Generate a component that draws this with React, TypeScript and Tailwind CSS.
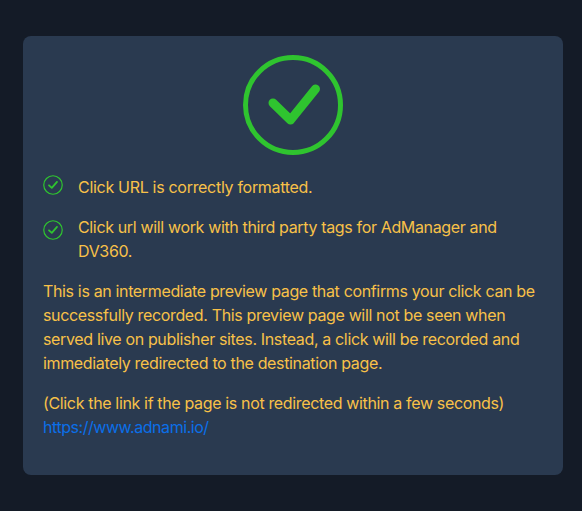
import React from 'react';

const SmallCheck = ({ className }: { className?: string }) => (
  <svg viewBox="0 0 20 20" fill="none" className={`w-5 h-5 shrink-0 ${className ?? ''}`}>
    <circle cx="10" cy="10" r="9.25" stroke="#2fc42f" strokeWidth="1.2" />
    <path d="M6 10.3 L8.8 12.9 L14 6.9" stroke="#2fc42f" strokeWidth="1.8" strokeLinecap="round" strokeLinejoin="round" />
  </svg>
);

const BigCheck = () => (
  <svg viewBox="0 0 100 100" fill="none" className="w-[100px] h-[100px]">
    <circle cx="50" cy="50" r="47.5" stroke="#2fc42f" strokeWidth="5" />
    <path d="M30 48 L47.5 65 L72.5 34" stroke="#2fc42f" strokeWidth="9" strokeLinecap="round" strokeLinejoin="round" />
  </svg>
);

export default function App() {
  return (
    <div
      className="w-[582px] h-[511px] bg-[#141b27] pt-9 px-[23px] overflow-hidden"
      style={{ fontFamily: 'Inter, "Noto Sans", sans-serif' }}
    >
      <div className="w-[540px] h-[439px] bg-[#2a3a50] rounded-lg pt-[19px] px-5 text-base leading-6 tracking-[-0.35px] text-[#f8c148]">
        <div className="flex justify-center mb-5">
          <BigCheck />
        </div>
        <div className="flex items-start gap-[15px] mb-4">
          <SmallCheck />
          <span className="tracking-[-0.3px]">Click URL is correctly formatted.</span>
        </div>
        <div className="flex items-start gap-[15px] mb-4">
          <SmallCheck className="mt-[5px]" />
          <span>Click url will work with third party tags for AdManager and DV360.</span>
        </div>
        <p className="mb-4">
          This is an intermediate preview page that confirms your click can be successfully recorded. This preview page will not be seen when served live on publisher sites. Instead, a click will be recorded and immediately redirected to the destination page.
        </p>
        <p>
          (Click the link if the page is not redirected within a few seconds)
          <br />
          <a href="#" className="text-[#0a6fe8] tracking-[-0.45px]">https://www.adnami.io/</a>
        </p>
      </div>
    </div>
  );
}
